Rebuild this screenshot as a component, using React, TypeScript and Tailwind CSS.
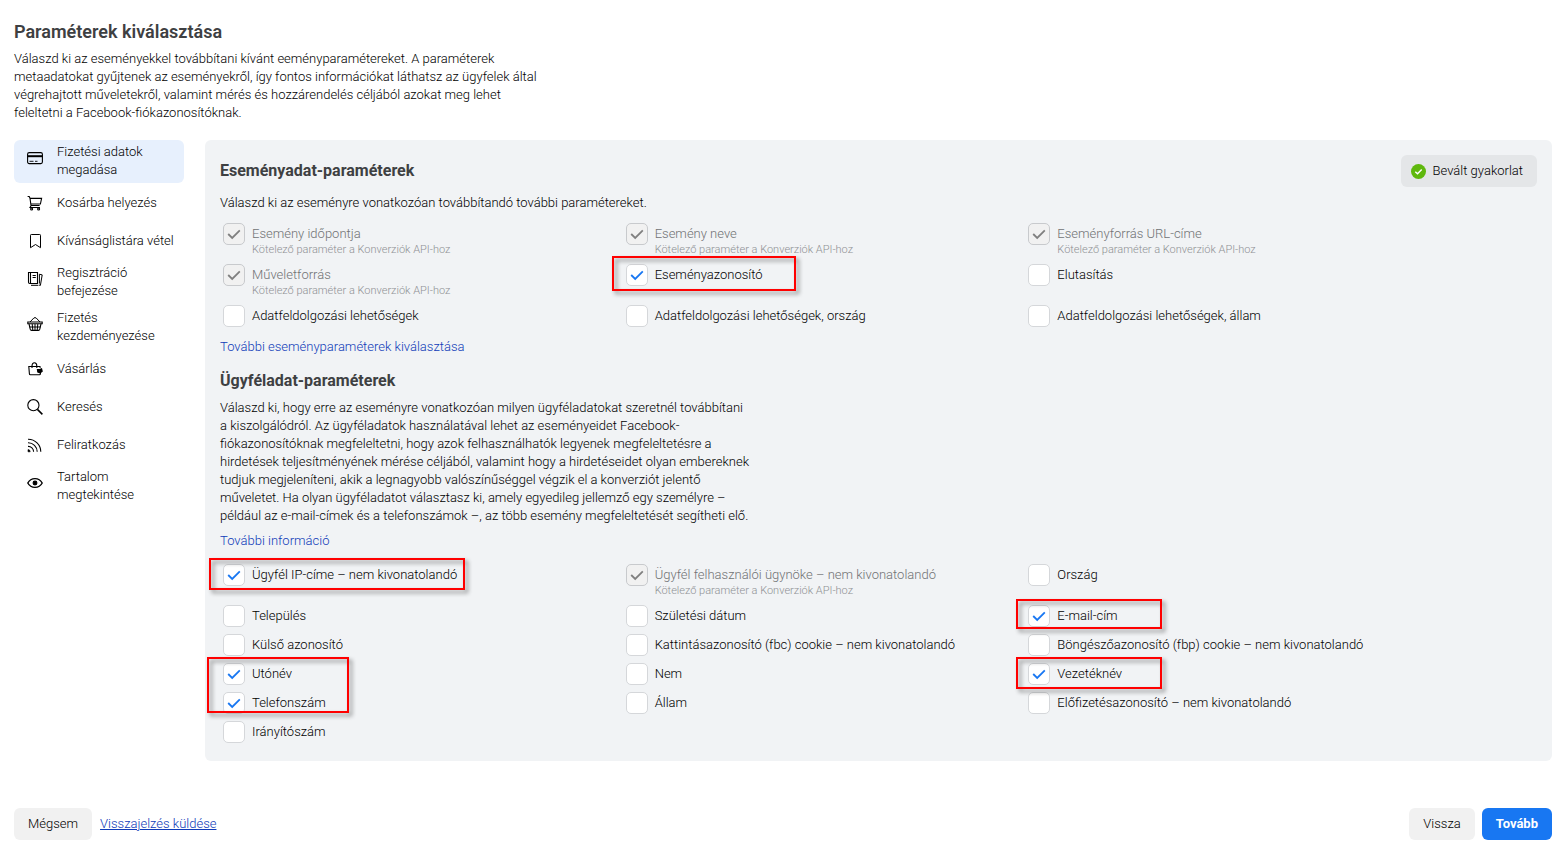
import React, { useId } from 'react';

interface Param {
  label: string;
  checked?: boolean;
  required?: boolean;
  // size and place of the red frame around the option
  frame?: string;
}

interface EventItem {
  label: string;
  icon: React.ReactNode;
  active?: boolean;
}

const events: EventItem[] = [
  {
    label: 'Fizetési adatok megadása',
    active: true,
    icon: (
      <>
        <rect x="0.6" y="2.6" width="14.8" height="11" rx="1.6" />
        <path d="M0.6 6.2h14.8" strokeWidth="2" />
        <path d="M2.5 11.3h4M8 11.3h2.5" strokeWidth="0.9" />
      </>
    ),
  },
  {
    label: 'Kosárba helyezés',
    icon: (
      <>
        <path d="M.6 1.5h1.6l.8 1.7 1 7.3h8.6M3 3.4h11.6L13.4 9H3.8M4.2 10.5l-1.2 2h10" />
        <circle cx="4.6" cy="14" r="1" />
        <circle cx="11.6" cy="14" r="1" />
      </>
    ),
  },
  {
    label: 'Kívánságlistára vétel',
    icon: <path d="M3.5 2.3a.8.8 0 0 1 .8-.8h8.4a.8.8 0 0 1 .8.8v12.4l-5-3.2-5 3.2z" strokeWidth="1" />,
  },
  {
    label: 'Regisztráció befejezése',
    icon: (
      <>
        <path d="M1.5 1.5h9v11H2.7a1.2 1.2 0 0 1-1.2-1.2zM3.5 1.5v11M5.6 4.5h3.2M5.6 6.5h3.2" />
        <path d="M4 14.3h7.4M12.4 3.2l2.8.7-1.8 10.5-1.4-.4M12.4 3.2v9.4" strokeWidth="1" />
      </>
    ),
  },
  {
    label: 'Fizetés kezdeményezése',
    icon: (
      <>
        <path d="M.8 6h14.4v1.8H.8zM2 7.8l1.2 5.4c.2.8.6 1.2 1.3 1.2h7c.7 0 1.1-.4 1.3-1.2L14 7.8" />
        <path d="M3 6l4-4.2h2L13 6M5.2 8l.6 6.2M8 8v6.2M10.8 8l-.6 6.2M2.6 11h10.8" strokeWidth="1" />
      </>
    ),
  },
  {
    label: 'Vásárlás',
    icon: (
      <>
        <path d="M13.4 11.2v1.6a1 1 0 0 1-1 1H3.4a1 1 0 0 1-1-1L1.8 5.5h11.2l.2 1.3" />
        <path d="M5 7V5c0-2 1-3.2 2.4-3.2S9.8 3 9.8 5v2" />
        <path d="M10.4 8.6h2.4l1.8-.8.6 2.4-2 1.6-2.4-.8z" fill="currentColor" />
      </>
    ),
  },
  {
    label: 'Keresés',
    icon: (
      <>
        <circle cx="6.4" cy="6.2" r="5.6" />
        <path d="M10.4 10.4l5 5" strokeWidth="1.5" />
      </>
    ),
  },
  {
    label: 'Feliratkozás',
    icon: (
      <>
        <path d="M1 2.2a12.6 12.6 0 0 1 12.8 12.6M1 5.8a9 9 0 0 1 9.2 9M1 9.4a5.4 5.4 0 0 1 5.6 5.4" />
        <path d="M1 12.6a2.2 2.2 0 0 1 2.2 2.2H1z" fill="currentColor" strokeWidth="0.6" />
      </>
    ),
  },
  {
    label: 'Tartalom megtekintése',
    icon: (
      <>
        <path d="M.8 8C2.4 5 5 3.6 8 3.6S13.6 5 15.2 8c-1.6 3-4.2 4.4-7.2 4.4S2.4 11 .8 8z" strokeWidth="1.4" />
        <circle cx="8" cy="8" r="1.9" fill="currentColor" />
      </>
    ),
  },
];

const eventParams: Param[] = [
  { label: 'Esemény időpontja', checked: true, required: true },
  { label: 'Esemény neve', checked: true, required: true },
  { label: 'Eseményforrás URL-címe', checked: true, required: true },
  { label: 'Műveletforrás', checked: true, required: true },
  { label: 'Eseményazonosító', checked: true, frame: '-left-3.5 -top-2 w-[184px] h-[35px]' },
  { label: 'Elutasítás' },
  { label: 'Adatfeldolgozási lehetőségek' },
  { label: 'Adatfeldolgozási lehetőségek, ország' },
  { label: 'Adatfeldolgozási lehetőségek, állam' },
];

const customerParams: Param[] = [
  { label: 'Ügyfél IP-címe – nem kivonatolandó', checked: true, frame: '-left-3.5 -top-1.5 w-64 h-8' },
  { label: 'Ügyfél felhasználói ügynöke – nem kivonatolandó', checked: true, required: true },
  { label: 'Ország' },
  { label: 'Település' },
  { label: 'Születési dátum' },
  { label: 'E-mail-cím', checked: true, frame: '-left-3 -top-1.5 w-[146px] h-[30px]' },
  { label: 'Külső azonosító' },
  { label: 'Kattintásazonosító (fbc) cookie – nem kivonatolandó' },
  { label: 'Böngészőazonosító (fbp) cookie – nem kivonatolandó' },
  { label: 'Utónév', checked: true, frame: '-left-4 -top-1.5 w-[142px] h-14' },
  { label: 'Nem' },
  { label: 'Vezetéknév', checked: true, frame: '-left-3 -top-1.5 w-[146px] h-8' },
  { label: 'Telefonszám', checked: true },
  { label: 'Állam' },
  { label: 'Előfizetésazonosító – nem kivonatolandó' },
  { label: 'Irányítószám' },
];

const ParamOption = ({ label, checked, required, frame }: Param) => {
  const id = useId();
  return (
    <div className="relative flex items-start gap-[7px]">
      <div className="relative h-[22px] w-[22px] shrink-0">
        <input
          id={id}
          type="checkbox"
          defaultChecked={checked}
          disabled={required}
          className="peer block h-[22px] w-[22px] appearance-none rounded-[5px] border border-[#d5d7da] bg-white disabled:border-[#c8cacd] disabled:bg-[#f1f1f1]"
        />
        <svg
          viewBox="0 0 22 22"
          className="pointer-events-none absolute inset-0 hidden text-[#1877f2] peer-checked:block peer-disabled:text-[#808080]"
          fill="none"
          stroke="currentColor"
          strokeWidth="1.8"
        >
          <path d="M5.2 11l4 4 7.6-7.6" />
        </svg>
      </div>
      <div className="pt-0.5">
        <label htmlFor={id} className={required ? 'block text-[#707274]' : 'block'}>
          {label}
        </label>
        {required && (
          <p className="text-[11px] leading-[14px] text-[#8f9194]">Kötelező paraméter a Konverziók API-hoz</p>
        )}
      </div>
      {frame && (
        <span
          className={`pointer-events-none absolute z-10 border-2 border-[#f00] drop-shadow-[3px_3px_2px_rgba(0,0,0,0.45)] ${frame}`}
        />
      )}
    </div>
  );
};

const App = () => {
  return (
    <div className="pt-5 pr-[11px] pb-[3px] pl-3.5 font-[Roboto,sans-serif] text-[13px] leading-[18px] font-light text-black">
      <header>
        <h1 className="text-lg leading-6 font-semibold text-[#3e4042]">Paraméterek kiválasztása</h1>
        <p className="mt-1.5 max-w-[535px]">
          Válaszd ki az eseményekkel továbbítani kívánt eeményparamétereket. A paraméterek metaadatokat gyűjtenek az
          eseményekről, így fontos információkat láthatsz az ügyfelek által végrehajtott műveletekről, valamint mérés és
          hozzárendelés céljából azokat meg lehet feleltetni a Facebook-fiókazonosítóknak.
        </p>
      </header>

      <div className="mt-[18px] flex items-start gap-[21px]">
        <nav className="flex w-[170px] shrink-0 flex-col gap-0.5">
          {events.map(({ label, icon, active }) => (
            <button
              key={label}
              type="button"
              className={`flex min-h-9 items-start rounded-md pr-1 pl-[13px] text-left ${active ? 'bg-[#e7f0fd]' : ''}`}
            >
              <span className="flex h-9 w-4 shrink-0 items-center">
                <svg viewBox="0 0 16 16" className="h-4 w-4" fill="none" stroke="currentColor" strokeWidth="1.1">
                  {icon}
                </svg>
              </span>
              <span className="ml-3.5 flex min-h-9 items-center pt-[3px] pb-1">{label}</span>
            </button>
          ))}
        </nav>

        <main className="min-w-0 flex-1 rounded-md bg-[#f1f3f5] px-[15px] pt-[15px] pb-[18px]">
          <section>
            <div className="flex items-center justify-between">
              <h2 className="text-base leading-[22px] font-bold text-[#3e4042]">Eseményadat-paraméterek</h2>
              <div className="flex h-8 items-center gap-[7px] rounded-md bg-[#e4e6e8] pr-3.5 pl-2.5">
                <svg viewBox="0 0 14 14" className="h-[15px] w-[15px]" fill="none">
                  <circle cx="7" cy="7" r="7" fill="#5fb80d" />
                  <path d="M4 7.2l2.1 2 3.9-4" stroke="#fff" strokeWidth="1.3" />
                </svg>
                Bevált gyakorlat
              </div>
            </div>
            <p className="mt-[7px]">Válaszd ki az eseményre vonatkozóan továbbítandó további paramétereket.</p>
            <div className="mt-[11px] grid auto-rows-[22px] grid-cols-3 gap-y-[19px] pr-[106px] pl-[3px]">
              {eventParams.map((param) => (
                <ParamOption key={param.label} {...param} />
              ))}
            </div>
            <a href="#" className="mt-[11px] inline-block text-[#0f3bb8]">
              További eseményparaméterek kiválasztása
            </a>
          </section>

          <section className="mt-3.5">
            <h2 className="text-base leading-[22px] font-bold text-[#3e4042]">Ügyféladat-paraméterek</h2>
            <p className="mt-[7px] max-w-[531px]">
              Válaszd ki, hogy erre az eseményre vonatkozóan milyen ügyféladatokat szeretnél továbbítani a
              kiszolgálódról. Az ügyféladatok használatával lehet az eseményeidet Facebook-fiókazonosítóknak
              megfeleltetni, hogy azok felhasználhatók legyenek megfeleltetésre a hirdetések teljesítményének mérése
              céljából, valamint hogy a hirdetéseidet olyan embereknek tudjuk megjeleníteni, akik a legnagyobb
              valószínűséggel végzik el a konverziót jelentő műveletet. Ha olyan ügyféladatot választasz ki, amely
              egyedileg jellemző egy személyre – például az e-mail-címek és a telefonszámok –, az több esemény
              megfeleltetését segítheti elő.
            </p>
            <a href="#" className="mt-[7px] inline-block text-[#0f3bb8]">
              További információ
            </a>
            <div className="mt-3.5 grid grid-cols-3 gap-y-[7px] pr-[106px] pl-[3px]">
              {customerParams.map((param) => (
                <ParamOption key={param.label} {...param} />
              ))}
            </div>
          </section>
        </main>
      </div>

      <footer className="mt-[47px] flex items-center justify-between">
        <div className="flex items-center gap-2">
          <button type="button" className="h-8 rounded-md bg-[#f1f1f1] px-3.5">
            Mégsem
          </button>
          <a href="#" className="text-[#0f3bb8] underline">
            Visszajelzés küldése
          </a>
        </div>
        <div className="flex gap-[7px]">
          <button type="button" className="h-8 rounded-md bg-[#f1f1f1] px-3.5">
            Vissza
          </button>
          <button type="button" className="h-8 rounded-md bg-[#1877f2] px-3.5 font-bold text-white">
            Tovább
          </button>
        </div>
      </footer>
    </div>
  );
};

export default App;
